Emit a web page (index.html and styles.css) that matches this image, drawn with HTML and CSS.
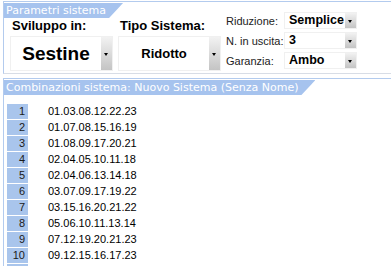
FILE: index.html
```html
<!DOCTYPE html>
<html lang="it">
<head>
    <meta charset="UTF-8">
    <title>Parametri sistema</title>
    <link rel="stylesheet" href="styles.css">
</head>
<body>
    <div class="panel params">
        <div class="params-left">
            <div class="tab">Parametri sistema</div>
            <div class="big-groups">
                <div class="group">
                    <div class="group-label">Sviluppo in:</div>
                    <div class="select big">
                        <span class="value sestine">Sestine</span>
                        <span class="arrow"></span>
                    </div>
                </div>
                <div class="group">
                    <div class="group-label">Tipo Sistema:</div>
                    <div class="select big">
                        <span class="value">Ridotto</span>
                        <span class="arrow"></span>
                    </div>
                </div>
            </div>
        </div>
        <div class="params-right">
            <span class="field-label">Riduzione:</span>
            <div class="select small"><span class="value">Semplice</span><span class="arrow"></span></div>
            <span class="field-label">N. in uscita:</span>
            <div class="select small"><span class="value">3</span><span class="arrow"></span></div>
            <span class="field-label">Garanzia:</span>
            <div class="select small"><span class="value">Ambo</span><span class="arrow"></span></div>
        </div>
    </div>

    <div class="panel combos">
        <div class="tab">Combinazioni sistema: Nuovo Sistema (Senza Nome)</div>
        <div class="rows">
            <div class="row"><span class="num">1</span><span class="combo">01.03.08.12.22.23</span></div>
            <div class="row"><span class="num">2</span><span class="combo">01.07.08.15.16.19</span></div>
            <div class="row"><span class="num">3</span><span class="combo">01.08.09.17.20.21</span></div>
            <div class="row"><span class="num">4</span><span class="combo">02.04.05.10.11.18</span></div>
            <div class="row"><span class="num">5</span><span class="combo">02.04.06.13.14.18</span></div>
            <div class="row"><span class="num">6</span><span class="combo">03.07.09.17.19.22</span></div>
            <div class="row"><span class="num">7</span><span class="combo">03.15.16.20.21.22</span></div>
            <div class="row"><span class="num">8</span><span class="combo">05.06.10.11.13.14</span></div>
            <div class="row"><span class="num">9</span><span class="combo">07.12.19.20.21.23</span></div>
            <div class="row"><span class="num">10</span><span class="combo">09.12.15.16.17.23</span></div>
            <div class="row"><span class="num"></span></div>
        </div>
    </div>
</body>
</html>
```

FILE: styles.css
```css
:root {
    --tab-blue: #a6c3ee;
    --line-blue: #b3cbee;
    --cell-blue: #a9c5ec;
}

body {
    margin: 0;
    background: white;
    font-family: 'Liberation Sans', Arial, sans-serif;
    color: black;
    overflow: hidden;
    height: 266px;
}

.panel {
    margin-left: 3px;
    border-left: 1px solid var(--line-blue);
    border-top: 1px solid var(--line-blue);
}

.tab {
    width: fit-content;
    height: 15px;
    line-height: 15px;
    padding: 0 17px 0 2px;
    background: var(--tab-blue);
    color: white;
    font-family: 'DejaVu Sans', Verdana, sans-serif;
    font-size: 11px;
    clip-path: polygon(0 0, 100% 0, calc(100% - 14px) 100%, 0 100%);
}

/* parametri */

.params {
    margin-top: 1px;
    display: flex;
    height: 71px;
    border-bottom: 1px solid #d8dde6;
}

.params-left {
    width: 222px;
    padding-top: 1px;
}

.big-groups {
    display: flex;
    gap: 5px;
    padding-left: 6px;
}

.group-label {
    font-weight: bold;
    font-size: 13px;
    line-height: 15px;
    padding: 0 0 3px 2px;
}

.select {
    display: flex;
    border: 1px solid #f0f0f0;
    background: white;
}

.select .value {
    flex: 1;
    font-weight: bold;
}

.select.big {
    width: 101px;
    height: 33px;
}

.select.big .value {
    text-align: center;
    line-height: 33px;
    font-size: 13px;
}

.select.big .value.sestine {
    font-size: 19px;
}

.arrow {
    width: 11px;
    position: relative;
    background: linear-gradient(#f2f2f2, #c4c4c4);
}

.arrow::after {
    content: "";
    position: absolute;
    left: 3px;
    top: 50%;
    margin-top: -1px;
    border-left: 2px solid transparent;
    border-right: 2px solid transparent;
    border-top: 3px solid black;
}

.params-right {
    display: grid;
    grid-template-columns: 58px 73px;
    grid-auto-rows: 17px;
    row-gap: 3px;
    align-items: center;
    padding-top: 10px;
    font-size: 11px;
}

.field-label {
    color: #222;
}

.select.small {
    height: 15px;
}

.select.small .value {
    font-size: 12.5px;
    line-height: 15px;
    padding-left: 4px;
}

/* combinazioni */

.combos {
    margin-top: 4px;
    padding-top: 1px;
}

.rows {
    padding: 9px 0 0 3px;
}

.row {
    display: flex;
    height: 15px;
    margin-bottom: 1px;
    font-size: 11px;
    line-height: 15px;
}

.num {
    width: 18px;
    padding-right: 3px;
    text-align: right;
    background: var(--cell-blue);
    color: #1a1a1a;
}

.combo {
    padding-left: 20px;
}
```
